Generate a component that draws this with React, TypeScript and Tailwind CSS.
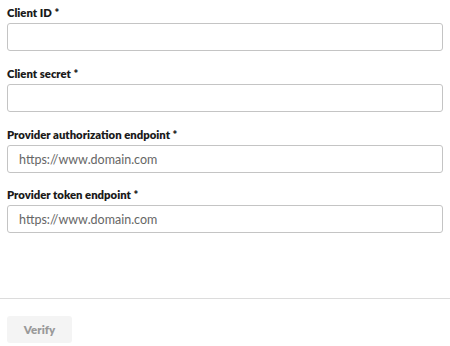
import React from "react";

const fields = [
  { label: "Client ID *", placeholder: "" },
  { label: "Client secret *", placeholder: "" },
  { label: "Provider authorization endpoint *", placeholder: "https://www.domain.com" },
  { label: "Provider token endpoint *", placeholder: "https://www.domain.com" },
];

export default function App() {
  return (
    <div
      className="w-[450px] h-[346px] bg-white overflow-hidden flex flex-col"
      style={{ fontFamily: "Lato, 'Open Sans', sans-serif" }}
    >
      <div className="px-[7px] pt-[5px] flex flex-col">
        {fields.map((f, i) => (
          <div key={f.label} className={`flex flex-col ${i === 2 ? "mb-[14px]" : "mb-[15px]"}`}>
            <label className="text-[11.3px] leading-[16px] font-extrabold text-[#1a1a1a] mb-[2px]">
              {f.label}
            </label>
            <input
              className="h-[28px] w-full rounded-[3px] border border-[#c4c4c4] bg-white px-[11px] text-[12.5px] text-[#333] placeholder:text-[#666] outline-none"
              placeholder={f.placeholder}
            />
          </div>
        ))}
      </div>
      <div className="mt-[50px] border-t border-[#dcdcdc]" />
      <div className="px-[7px] pt-[17px]">
        <button className="h-[27px] w-[65px] rounded-[3px] bg-[#f4f4f4] text-[11.5px] font-extrabold text-[#9a9a9a]">
          Verify
        </button>
      </div>
    </div>
  );
}
